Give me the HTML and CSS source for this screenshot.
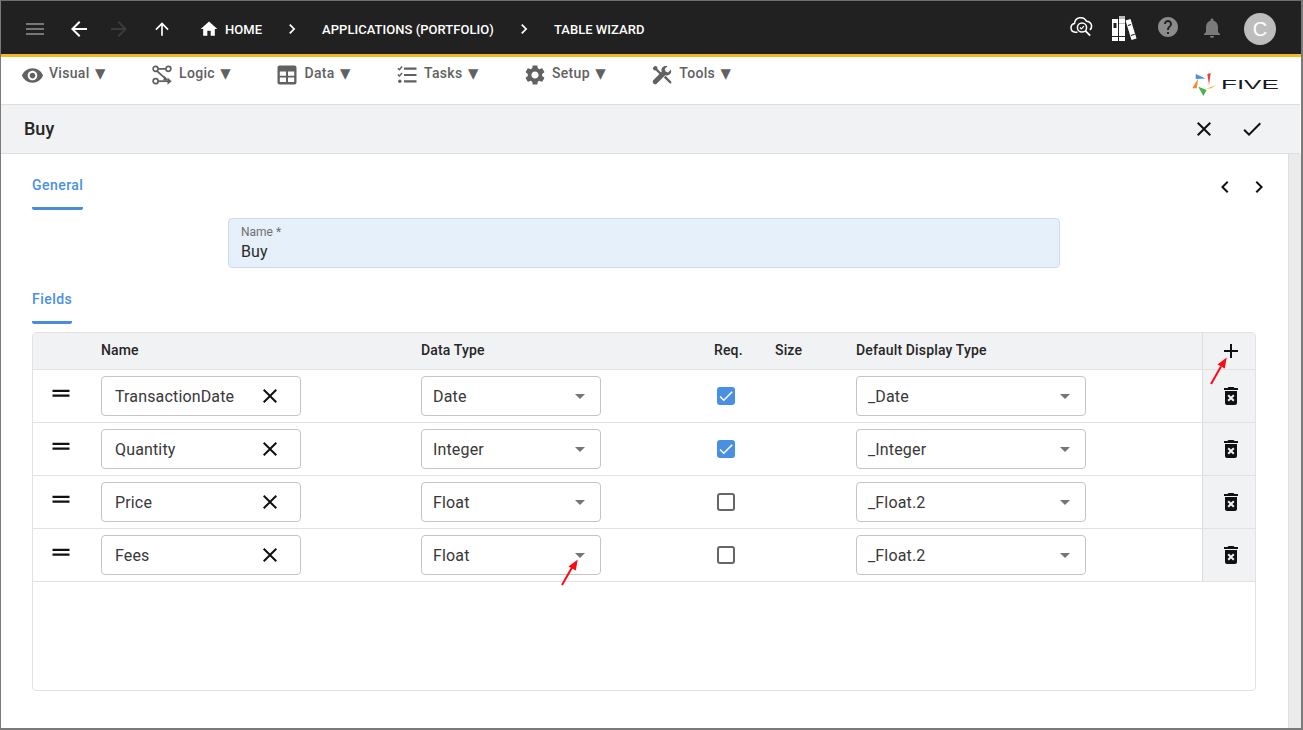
FILE: index.html
```html
<!DOCTYPE html>
<html lang="en">
<head>
<meta charset="utf-8">
<title>Table Wizard</title>
<link rel="stylesheet" href="styles.css">
</head>
<body>
<svg class="defs" width="0" height="0" aria-hidden="true">
  <symbol id="i-menu" viewBox="0 0 24 24"><path d="M3 18h18v-2H3v2zm0-5h18v-2H3v2zm0-7v2h18V6H3z"/></symbol>
  <symbol id="i-back" viewBox="0 0 24 24"><path d="M20 11H7.83l5.59-5.59L12 4l-8 8 8 8 1.41-1.41L7.83 13H20v-2z"/></symbol>
  <symbol id="i-forward" viewBox="0 0 24 24"><path d="M12 4l-1.41 1.41L16.17 11H4v2h12.17l-5.58 5.59L12 20l8-8z"/></symbol>
  <symbol id="i-up" viewBox="0 0 24 24"><path d="M4 12l1.41 1.41L11 7.83V20h2V7.83l5.58 5.59L20 12l-8-8-8 8z"/></symbol>
  <symbol id="i-home" viewBox="0 0 24 24"><path d="M10 20v-6h4v6h5v-8h3L12 3 2 12h3v8z"/></symbol>
  <symbol id="i-right" viewBox="0 0 24 24"><path d="M10 6L8.59 7.41 13.17 12l-4.58 4.59L10 18l6-6z"/></symbol>
  <symbol id="i-left" viewBox="0 0 24 24"><path d="M15.41 7.41L14 6l-6 6 6 6 1.41-1.41L10.83 12z"/></symbol>
  <symbol id="i-eye" viewBox="0 0 24 24"><path d="M12 4.5C7 4.5 2.73 7.61 1 12c1.73 4.39 6 7.5 11 7.5s9.27-3.11 11-7.5c-1.73-4.39-6-7.5-11-7.5zM12 17c-2.76 0-5-2.24-5-5s2.24-5 5-5 5 2.24 5 5-2.24 5-5 5zm0-8c-1.66 0-3 1.34-3 3s1.34 3 3 3 3-1.34 3-3-1.34-3-3-3z"/></symbol>
  <symbol id="i-logic" viewBox="0 0 20 20">
    <g fill="none" stroke="currentColor" stroke-width="1.7">
      <circle cx="3.6" cy="3.8" r="2.5"/><circle cx="16.4" cy="3.8" r="2.5"/><circle cx="3.6" cy="16.2" r="2.5"/>
      <path d="M6.2 3.8h7.6M5 6l9 8.2"/><path d="M6.2 16.2H17"/>
    </g>
    <path d="M15.5 12.6l4.2 3.6-4.2 3.6zM12.6 10.8l3.4 4.4-4.9.3z"/>
  </symbol>
  <symbol id="i-table" viewBox="0 0 20 20"><path fill-rule="evenodd" d="M2.5 .5h15A2 2 0 0 1 19.500 2.500v15a2 2 0 0 1-2 2h-15a2 2 0 0 1-2-2v-15a2 2 0 0 1 2-2zM2.800 6.500v4.200h6.200V6.500zm8.200 0v4.200h6.200V6.500zM2.800 12.500v4.400h6.200v-4.400zm8.200 0v4.400h6.200v-4.400z"/></symbol>
  <symbol id="i-tasks" viewBox="0 0 20 20">
    <path d="M7 2.600h12.500v2.200H7zM7 8.900h12.500v2.200H7zM7 15.200h12.500v2.200H7z"/>
    <circle cx="2.800" cy="16.300" r="1.700"/>
    <path fill="none" stroke="currentColor" stroke-width="1.500" d="M.9 3.200l1.500 1.500L5.100 1.600M.9 9.500l1.500 1.500 2.700-3.100"/>
  </symbol>
  <symbol id="i-gear" viewBox="0 0 24 24"><path d="M19.140 12.940c.04-.3.06-.61.06-.94 0-.32-.02-.64-.07-.94l2.030-1.580c.18-.14.23-.41.12-.61l-1.920-3.320c-.12-.22-.37-.29-.59-.22l-2.390.96c-.5-.38-1.030-.7-1.620-.94l-.36-2.540c-.04-.24-.24-.41-.48-.41h-3.840c-.24 0-.43.17-.47.41l-.36 2.540c-.59.24-1.130.57-1.620.94l-2.390-.96c-.22-.08-.47 0-.59.22L2.740 8.870c-.12.21-.08.47.12.61l2.030 1.580c-.05.3-.09.63-.09.94s.02.64.07.94l-2.030 1.580c-.18.14-.23.41-.12.61l1.920 3.320c.12.22.37.29.59.22l2.390-.96c.5.38 1.030.7 1.620.94l.36 2.540c.05.24.24.41.48.41h3.840c.24 0 .44-.17.47-.41l.36-2.540c.59-.24 1.130-.56 1.620-.94l2.390.96c.22.08.47 0 .59-.22l1.920-3.320c.12-.22.07-.47-.12-.61l-2.010-1.580zM12 15.600c-1.980 0-3.600-1.620-3.600-3.600s1.620-3.600 3.600-3.600 3.600 1.620 3.600 3.600-1.620 3.600-3.600 3.600z"/></symbol>
  <symbol id="i-tools" viewBox="0 0 20 20">
    <path d="M.8 3L3 .8l2.200 1 .3 2.100 6 6-1.700 1.700-6-6-2.100-.3z"/>
    <path d="M18.900 4.600l-2.800 2.800-2.600-.8-.8-2.600L15.500 1.200c-2-.7-4.200-.2-5.200 1.300-1 1.300-1.100 2.900-.6 4.200L1.500 15a2.400 2.400 0 0 0 3.400 3.400l8.300-8.200c1.400.5 3 .3 4.300-.7 1.500-1.100 2.100-3 1.400-4.900z"/>
    <path d="M11.800 12.400l5.600 5.700c.8.8 1.900.6 2-.4.100-.6-.1-1-.5-1.400l-5.400-5.600z"/>
  </symbol>
  <symbol id="i-help" viewBox="0 0 24 24"><path d="M12 2C6.480 2 2 6.480 2 12s4.480 10 10 10 10-4.480 10-10S17.520 2 12 2zm1 17h-2v-2h2v2zm2.070-7.750l-.9.920C13.450 12.900 13 13.500 13 15h-2v-.5c0-1.100.45-2.100 1.170-2.830l1.240-1.260c.37-.36.59-.86.59-1.410 0-1.100-.9-2-2-2s-2 .9-2 2H8c0-2.210 1.790-4 4-4s4 1.790 4 4c0 .88-.36 1.680-.93 2.250z"/></symbol>
  <symbol id="i-bell" viewBox="0 0 24 24"><path d="M12 22c1.100 0 2-.9 2-2h-4c0 1.100.89 2 2 2zm6-6v-5c0-3.070-1.640-5.640-4.500-6.320V4c0-.83-.67-1.500-1.500-1.500s-1.500.67-1.500 1.500v.68C7.630 5.360 6 7.920 6 11v5l-2 2v1h16v-1l-2-2z"/></symbol>
  <symbol id="i-close" viewBox="0 0 24 24"><path d="M19 6.410L17.590 5 12 10.590 6.410 5 5 6.410 10.590 12 5 17.590 6.410 19 12 13.410 17.590 19 19 17.590 13.410 12z"/></symbol>
  <symbol id="i-check" viewBox="0 0 24 24"><path d="M9 16.170L4.830 12l-1.420 1.410L9 19 21 7l-1.410-1.410z"/></symbol>
  <symbol id="i-add" viewBox="0 0 24 24"><path d="M19 13h-6v6h-2v-6H5v-2h6V5h2v6h6v2z"/></symbol>
  <symbol id="i-trash" viewBox="0 0 24 24"><path d="M6 19c0 1.100.9 2 2 2h8c1.100 0 2-.9 2-2V7H6v12zm2.460-7.120l1.410-1.410L12 12.590l2.120-2.120 1.410 1.410L13.410 14l2.120 2.120-1.410 1.410L12 15.410l-2.120 2.120-1.410-1.410L10.590 14l-2.130-2.120zM15.500 4l-1-1h-5l-1 1H5v2h14V4z"/></symbol>
  <symbol id="i-caret" viewBox="0 0 24 24"><path d="M7 10l5 5 5-5z"/></symbol>
  <symbol id="i-drag" viewBox="0 0 24 24"><path d="M3.500 5.700h17V8h-17zM3.500 10.500h17v2.300h-17z"/></symbol>
</svg>

<div class="window">
  <header class="topbar">
    <div class="crumbs">
      <svg class="ic ic-menu"><use href="#i-menu"/></svg>
      <svg class="ic ic-back"><use href="#i-back"/></svg>
      <svg class="ic ic-forward"><use href="#i-forward"/></svg>
      <svg class="ic-sm ic-up"><use href="#i-up"/></svg>
      <svg class="ic-sm ic-home"><use href="#i-home"/></svg>
      <span class="crumb crumb-home">HOME</span>
      <svg class="ic-sm ic-sep"><use href="#i-right"/></svg>
      <span class="crumb">APPLICATIONS (PORTFOLIO)</span>
      <svg class="ic-sm ic-sep"><use href="#i-right"/></svg>
      <span class="crumb">TABLE WIZARD</span>
    </div>
    <div class="top-actions">
      <svg class="cloud" viewBox="0 0 24 22" fill="none" stroke="#fff">
        <path stroke-width="1.500" d="M7.500 17.200H5.200a4.400 4.400 0 0 1-.7-8.700A6.300 6.300 0 0 1 16.400 6.200a5 5 0 0 1 3.500 8.700"/>
        <circle stroke-width="1.500" cx="12" cy="12.500" r="4.600"/>
        <path stroke-width="1.800" d="M15.400 15.900l4.800 4.800"/>
        <path stroke-width="1.200" d="M9.900 12.500l1.500 1.500 2.600-2.800"/>
      </svg>
      <svg class="books" viewBox="0 0 25 25">
        <path fill="#fff" d="M0 3h6v22H0zM7 1h6v24H7z"/>
        <path fill="#bbb" d="M7 0h6v3H7zM7 7h6v1H7z"/>
        <path fill="#212121" d="M1.500 7h3v5h-3zM0 20h6v1H0zM7 20h6v1H7z"/>
        <path fill="#fff" d="M13.500 4.500l5-1.500 6 19.500-5 1.500z"/>
        <path fill="#212121" d="M15.800 9l3-1 .3 1-3 1zM18.800 19l3.800-1.200.3 1-3.800 1.200z"/>
      </svg>
      <svg class="ic ic-help"><use href="#i-help"/></svg>
      <svg class="ic ic-bell"><use href="#i-bell"/></svg>
      <div class="avatar">C</div>
    </div>
  </header>

  <nav class="toolbar">
    <div class="menu-item"><svg class="mi mi-eye"><use href="#i-eye"/></svg><span>Visual <span class="tri">▼</span></span></div>
    <div class="menu-item"><svg class="mi"><use href="#i-logic"/></svg><span>Logic <span class="tri">▼</span></span></div>
    <div class="menu-item"><svg class="mi"><use href="#i-table"/></svg><span>Data <span class="tri">▼</span></span></div>
    <div class="menu-item"><svg class="mi"><use href="#i-tasks"/></svg><span>Tasks <span class="tri">▼</span></span></div>
    <div class="menu-item"><svg class="mi mi-gear"><use href="#i-gear"/></svg><span>Setup <span class="tri">▼</span></span></div>
    <div class="menu-item"><svg class="mi"><use href="#i-tools"/></svg><span>Tools <span class="tri">▼</span></span></div>
    <div class="logo">
      <svg class="logo-star" viewBox="0 0 24 24">
        <path fill="#4a90e2" d="M3.700 1l10 4.500-10 .4z"/>
        <path fill="#e8413c" d="M15.300 1l3.400-1-1.700 12z"/>
        <path fill="#fbbc2d" d="M13.700 16l10-4-4 3.300z"/>
        <path fill="#4caf50" d="M6.300 13.700l8.400 3.300-3.400 6z"/>
        <path fill="#f58a2e" d="M.3 15.300l6-10-1.600 10z"/>
      </svg>
      <span class="logo-text">FIVE</span>
    </div>
  </nav>

  <div class="titlebar">
    <h1 class="title">Buy</h1>
    <div class="title-actions">
      <svg class="ic"><use href="#i-close"/></svg>
      <svg class="ic"><use href="#i-check"/></svg>
    </div>
  </div>

  <div class="body">
    <main class="content">
      <div class="tab-row">
        <div class="tab">General</div>
        <div class="pager">
          <svg class="ic"><use href="#i-left"/></svg>
          <svg class="ic"><use href="#i-right"/></svg>
        </div>
      </div>

      <div class="name-field">
        <label class="name-label">Name *</label>
        <div class="name-value">Buy</div>
      </div>

      <div class="tab tab-fields">Fields</div>

      <section class="table">
        <div class="grid-row head">
          <div></div>
          <div class="th">Name</div>
          <div class="th">Data Type</div>
          <div class="th">Req.</div>
          <div class="th">Size</div>
          <div class="th">Default Display Type</div>
          <div class="action"><svg class="ic"><use href="#i-add"/></svg></div>
        </div>

        <div class="grid-row">
          <div class="drag"><svg class="ic"><use href="#i-drag"/></svg></div>
          <div class="box box-name"><span>TransactionDate</span><svg class="ic"><use href="#i-close"/></svg></div>
          <div class="box box-type"><span>Date</span><svg class="ic caret"><use href="#i-caret"/></svg></div>
          <div><span class="cb on"><svg viewBox="0 0 24 24"><path d="M9 16.170L4.830 12l-1.420 1.410L9 19 21 7l-1.410-1.410z"/></svg></span></div>
          <div></div>
          <div class="box box-display"><span>_Date</span><svg class="ic caret"><use href="#i-caret"/></svg></div>
          <div class="action"><svg class="ic"><use href="#i-trash"/></svg></div>
        </div>

        <div class="grid-row">
          <div class="drag"><svg class="ic"><use href="#i-drag"/></svg></div>
          <div class="box box-name"><span>Quantity</span><svg class="ic"><use href="#i-close"/></svg></div>
          <div class="box box-type"><span>Integer</span><svg class="ic caret"><use href="#i-caret"/></svg></div>
          <div><span class="cb on"><svg viewBox="0 0 24 24"><path d="M9 16.170L4.830 12l-1.420 1.410L9 19 21 7l-1.410-1.410z"/></svg></span></div>
          <div></div>
          <div class="box box-display"><span>_Integer</span><svg class="ic caret"><use href="#i-caret"/></svg></div>
          <div class="action"><svg class="ic"><use href="#i-trash"/></svg></div>
        </div>

        <div class="grid-row">
          <div class="drag"><svg class="ic"><use href="#i-drag"/></svg></div>
          <div class="box box-name"><span>Price</span><svg class="ic"><use href="#i-close"/></svg></div>
          <div class="box box-type"><span>Float</span><svg class="ic caret"><use href="#i-caret"/></svg></div>
          <div><span class="cb"></span></div>
          <div></div>
          <div class="box box-display"><span>_Float.2</span><svg class="ic caret"><use href="#i-caret"/></svg></div>
          <div class="action"><svg class="ic"><use href="#i-trash"/></svg></div>
        </div>

        <div class="grid-row">
          <div class="drag"><svg class="ic"><use href="#i-drag"/></svg></div>
          <div class="box box-name"><span>Fees</span><svg class="ic"><use href="#i-close"/></svg></div>
          <div class="box box-type"><span>Float</span><svg class="ic caret"><use href="#i-caret"/></svg></div>
          <div><span class="cb"></span></div>
          <div></div>
          <div class="box box-display"><span>_Float.2</span><svg class="ic caret"><use href="#i-caret"/></svg></div>
          <div class="action"><svg class="ic"><use href="#i-trash"/></svg></div>
        </div>
      </section>
    </main>
    <div class="scrollbar"></div>
  </div>

  <svg class="arrow arrow-add" viewBox="0 0 20 30"><path d="M1 29L11 11.500" stroke="#fb0a14" stroke-width="2" fill="none"/><path d="M16.700 2.500L7.500 9.500l7.300 4.100z" fill="#fb0a14"/></svg>
  <svg class="arrow arrow-select" viewBox="0 0 20 30"><path d="M1 29L11 11.500" stroke="#fb0a14" stroke-width="2" fill="none"/><path d="M16.700 3.500L7.500 10.500l7.300 4.100z" fill="#fb0a14"/></svg>
</div>
</body>
</html>
```

FILE: styles.css
```css
* { box-sizing: border-box; }
html, body { margin: 0; padding: 0; }
body { font-family: Roboto, "Liberation Sans", sans-serif; background: #fff; overflow: hidden; }
.defs { position: absolute; }

.window {
  position: relative;
  width: 1303px;
  height: 730px;
  display: flex;
  flex-direction: column;
  border-top: 1px solid #6e6e6e;
  border-left: 1px solid #7a7a7a;
  border-right: 2px solid #7a7a7a;
  border-bottom: 2px solid #7a7a7a;
  overflow: hidden;
}

.ic { width: 24px; height: 24px; flex: none; fill: currentColor; display: block; }
.ic-sm { width: 20px; height: 20px; flex: none; fill: currentColor; display: block; }

/* Top bar */
.topbar {
  height: 56px;
  flex: none;
  background: #212121;
  border-bottom: 3px solid #f6b926;
  display: flex;
  align-items: center;
  justify-content: space-between;
  padding: 2px 25px 0 22px;
  color: #fff;
}
.crumbs { display: flex; align-items: center; }
.ic-menu { color: #767676; }
.ic-back { margin-left: 20px; color: #fff; }
.ic-forward { margin-left: 16px; color: #3b3b3b; }
.ic-up { margin-left: 21px; margin-right: 2px; color: #fff; }
.ic-home { margin-left: 25px; }
.crumb { font-size: 13px; font-weight: 500; line-height: 20px; letter-spacing: .04px; white-space: nowrap; position: relative; top: 1px; }
.crumb-home { margin-left: 6px; }
.ic-sep { margin: 0 20px; }
.top-actions { display: flex; align-items: center; }
.cloud { width: 24px; height: 22px; display: block; margin-top: -5px; }
.books { width: 25px; height: 25px; display: block; margin-left: 18px; }
.ic-help { margin-left: 19px; color: #8b8b8b; margin-top: -3px; }
.ic-bell { margin-left: 20px; color: #7a7a7a; margin-top: -1px; }
.avatar {
  width: 32px;
  height: 32px;
  margin-left: 20px;
  border-radius: 50%;
  background: #bdbdbd;
  color: #fff;
  font-family: "Liberation Sans", sans-serif;
  font-size: 20px;
  line-height: 32px;
  text-align: center;
}

/* Toolbar */
.toolbar {
  position: relative;
  height: 47px;
  flex: none;
  background: #fff;
  display: flex;
  align-items: flex-start;
  gap: 45px;
  padding: 5px 0 0 21px;
}
.menu-item {
  display: flex;
  align-items: center;
  gap: 7px;
  height: 22px;
  color: #616161;
  font-size: 14px;
  font-weight: 500;
  letter-spacing: .3px;
  white-space: nowrap;
}
.tri { font-family: "DejaVu Sans", sans-serif; font-size: 13.500px; letter-spacing: 0; margin: 0 1.700px; }
.mi { width: 20px; height: 20px; fill: currentColor; flex: none; margin-top: 4px; }
.mi-eye { width: 23px; height: 23px; margin: 4px -1.500px 0; }
.mi-gear { width: 24px; height: 24px; margin: 4px -2px 0; }
.logo {
  margin-left: auto;
  margin-right: 21px;
  margin-top: 11px;
  display: flex;
  align-items: center;
}
.logo-star { width: 24px; height: 24px; display: block; }
.logo-text {
  display: block;
  width: 59px;
  margin-left: 5px;
  font-family: "Liberation Sans", sans-serif;
  font-size: 13px;
  line-height: 12px;
  color: #1a1a1a;
  transform: scaleX(2);
  transform-origin: left center;
}

/* Title */
.titlebar {
  height: 50px;
  flex: none;
  margin-right: 1px;
  background: #f1f2f4;
  border-top: 1px solid #dedede;
  border-bottom: 1px solid #dedede;
  display: flex;
  align-items: center;
  justify-content: space-between;
  padding: 0 35px 0 23px;
}
.title { margin: 0; font-size: 18px; font-weight: 500; color: #262626; line-height: 24px; }
.title-actions { display: flex; gap: 24px; color: #111; position: relative; left: -1px; }

/* Body */
.body { flex: 1; min-height: 0; display: flex; }
.content { flex: 1; min-width: 0; padding: 10px 32px 0 31px; background: #fff; }
.scrollbar { width: 13px; flex: none; background: #ebebeb; border-left: 1px solid #dfdfdf; }

.tab-row { display: flex; justify-content: space-between; align-items: flex-start; }
.tab {
  width: max-content;
  height: 46px;
  padding-top: 12px;
  font-size: 14px;
  line-height: 18px;
  font-weight: 500;
  letter-spacing: .45px;
  color: #4a90e2;
  border-bottom: 3px solid #4a8bdc;
  border-radius: 0 0 2px 2px;
}
.pager { display: flex; gap: 10px; margin: 11px -15px 0 0; color: #111; }

.name-field {
  width: 832px;
  height: 50px;
  margin: 8px 0 0 196px;
  padding: 6px 12px;
  background: #e6f0fa;
  border: 1px solid #cddcec;
  border-radius: 4px;
}
.name-label { display: block; font-size: 12px; line-height: 14px; color: #6f6f6f; }
.name-value { font-size: 16px; line-height: 22px; letter-spacing: .15px; color: #2b2b2b; margin-top: 2px; }

.tab-fields { margin-top: 10px; }

/* Table */
.table {
  height: 359px;
  margin-top: 8px;
  border: 1px solid #e2e2e2;
  border-radius: 4px;
  overflow: hidden;
}
.grid-row {
  display: grid;
  grid-template-columns: 68px 320px 293px 61px 81px 346px 53px;
  height: 53px;
  align-items: center;
  border-bottom: 1px solid #e2e2e2;
}
.grid-row > .action { align-self: stretch; }
.head {
  height: 37px;
  background: #f1f2f4;
  font-size: 14px;
  font-weight: 500;
  letter-spacing: .15px;
  color: #262626;
}
.th { margin-top: -2px; }
.action {
  height: 100%;
  display: flex;
  align-items: center;
  padding-left: 16px;
  background: #f1f2f4;
  border-left: 1px solid #dcdcdc;
  color: #111;
}
.drag { padding-left: 16px; color: #111; }

.box {
  height: 40px;
  display: flex;
  align-items: center;
  justify-content: space-between;
  background: #fff;
  border: 1px solid #c4c4c4;
  border-radius: 4px;
  font-size: 16px;
  letter-spacing: .15px;
  color: #383838;
}
.box-name { width: 200px; padding: 0 18px 0 13px; color: #383838; }
.box-name .ic { color: #111; }
.box-type { width: 180px; padding: 0 8px 0 11px; }
.box-display { width: 230px; padding: 0 8px 0 11px; }
.caret { color: #757575; }

.cb {
  display: block;
  width: 18px;
  height: 18px;
  margin-left: 3px;
  border: 2px solid #666;
  border-radius: 3px;
}
.cb.on { background: #4a90e2; border: 0; }
.cb svg { display: block; width: 18px; height: 18px; fill: #fff; }

/* Annotation arrows */
.arrow { position: absolute; width: 20px; height: 30px; }
.arrow-add { left: 1209px; top: 354px; }
.arrow-select { left: 560px; top: 555px; }
```
